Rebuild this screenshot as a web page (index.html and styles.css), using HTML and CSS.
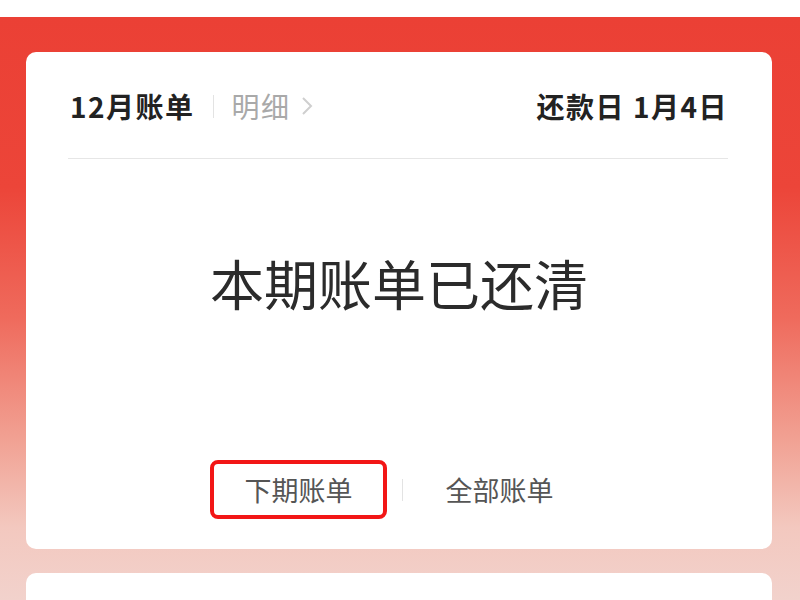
FILE: index.html
```html
<!DOCTYPE html>
<html lang="zh-CN">
<head>
  <meta charset="UTF-8">
  <meta name="viewport" content="width=device-width, initial-scale=1.0">
  <title>12月账单</title>
  <link rel="stylesheet" href="styles.css">
</head>
<body>
  <div class="page">
    <div class="card">
      <div class="card-head">
        <div class="head-left">
          <span class="month">12月账单</span>
          <span class="vline"></span>
          <a class="detail" href="#">明细
            <svg class="chev" width="12" height="20" viewBox="0 0 12 20">
              <polyline points="2,2 10,10 2,18" fill="none" stroke="#cfcfcf" stroke-width="2"/>
            </svg>
          </a>
        </div>
        <div class="due">还款日 1月4日</div>
      </div>

      <div class="status">本期账单已还清</div>

      <div class="actions">
        <a class="btn active" href="#">下期账单</a>
        <span class="vline sep"></span>
        <a class="btn" href="#">全部账单</a>
      </div>
    </div>

    <div class="card next"></div>
  </div>
</body>
</html>
```

FILE: styles.css
```css
* {
  box-sizing: border-box;
}

body {
  margin: 0;
  background: #fff;
  font-family: "Noto Sans CJK SC", "Noto Sans", sans-serif;
  overflow: hidden;
}

a {
  text-decoration: none;
}

.page {
  margin-top: 17px;
  height: 583px;
  padding: 35px 28px 0 26px;
  background: linear-gradient(#eb4035 0, #ec4539 170px, #ef6a5c 300px, #f1a092 420px, #f3c8bf 510px, #f2d2cc 583px);
  overflow: hidden;
}

.card {
  background: #fff;
  border-radius: 10px;
  height: 497px;
  display: flex;
  flex-direction: column;
}

.card.next {
  margin-top: 24px;
  height: 60px;
}

.card-head {
  height: 107px;
  margin: 0 44px 0 42px;
  padding: 2px 0 0 2px;
  border-bottom: 1px solid #e6e6e6;
  display: flex;
  align-items: center;
  justify-content: space-between;
  font-size: 28px;
  letter-spacing: 1.5px;
}

.head-left {
  display: flex;
  align-items: center;
}

.month {
  font-weight: 700;
  color: #222;
}

.vline {
  width: 1px;
  height: 23px;
  background: #e3e3e3;
  margin: 0 18px 0 18px;
}

.detail {
  color: #a9a9a9;
  display: flex;
  align-items: center;
}

.chev {
  margin-left: 10px;
}

.due {
  font-weight: 700;
  color: #222;
}

.status {
  margin-top: 91px;
  text-align: center;
  font-size: 54px;
  line-height: 65px;
  color: #2b2b2b;
}

.actions {
  margin-top: auto;
  margin-bottom: 30px;
  display: flex;
  align-items: center;
  justify-content: center;
}

.btn {
  width: 177px;
  height: 59px;
  border: 4px solid transparent;
  border-radius: 8px;
  display: flex;
  align-items: center;
  justify-content: center;
  font-size: 27px;
  color: #555;
}

.btn.active {
  border-color: #f21616;
}

.sep {
  height: 22px;
  margin: 0 8px 0 15px;
}
```
